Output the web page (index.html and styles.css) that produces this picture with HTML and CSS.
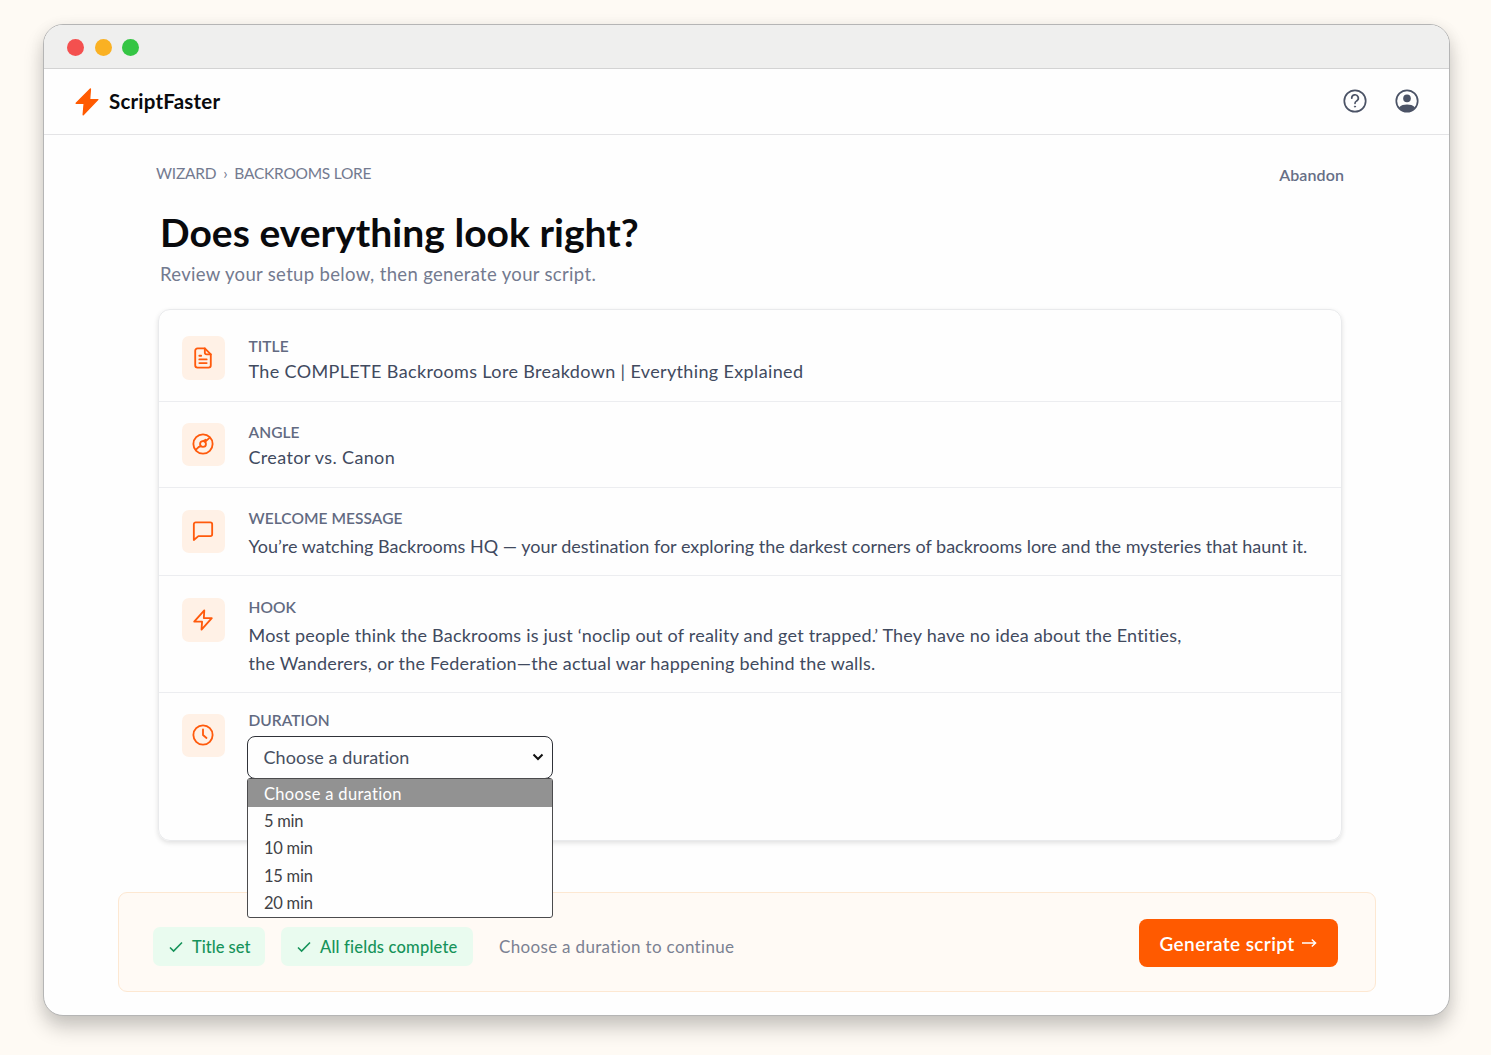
FILE: index.html
```html
<!DOCTYPE html>
<html lang="en">

<head>
    <meta charset="UTF-8">
    <meta name="viewport" content="width=device-width, initial-scale=1.0">
    <title>ScriptFaster - Review</title>
    <link rel="stylesheet" href="styles.css">
</head>

<body>

    <div class="window">
        <!-- Window title bar -->
        <div class="titlebar">
            <span class="dot red"></span>
            <span class="dot yellow"></span>
            <span class="dot green"></span>
        </div>

        <!-- App header -->
        <header class="header">
            <a href="#" class="logo">
                <svg width="24" height="28" viewBox="0 0 24 28">
                    <path d="M15.4 1 1.2 15.2h8L8.2 26.8 22.8 11.6h-8.2z" fill="#ff5a00" stroke="#ff5a00" stroke-width="1.4" stroke-linejoin="round"/>
                </svg>
                <span>ScriptFaster</span>
            </a>
            <div class="header-icons">
                <svg width="24" height="24" viewBox="0 0 24 24" fill="none" stroke="#4b5366" stroke-width="1.7" stroke-linecap="round">
                    <circle cx="12" cy="12" r="10.7"/>
                    <path d="M8.7 9.2a3.3 3.3 0 1 1 5 2.7c-1.1.7-1.7 1.2-1.7 2.4"/>
                    <circle cx="12" cy="17.6" r=".6" fill="#4b5366" stroke-width="1"/>
                </svg>
                <svg width="24" height="24" viewBox="0 0 24 24" fill="none">
                    <circle cx="12" cy="12" r="10.7" stroke="#4b5366" stroke-width="1.7"/>
                    <circle cx="12" cy="9.4" r="3.8" fill="#4b5366"/>
                    <path d="M4 18.4c2-2.2 5-2.9 8-2.9s6 .7 8 2.9c-2 2.7-5 4.3-8 4.3s-6-1.6-8-4.3z" fill="#4b5366"/>
                </svg>
            </div>
        </header>

        <main class="content">
            <div class="top-row">
                <nav class="breadcrumb">
                    <a href="#">WIZARD</a>
                    <span class="separator">›</span>
                    <a href="#">BACKROOMS LORE</a>
                </nav>
                <a href="#" class="abandon">Abandon</a>
            </div>

            <h1>Does everything look right?</h1>
            <p class="subtitle">Review your setup below, then generate your script.</p>

            <!-- Review card -->
            <section class="card">
                <div class="row row-title">
                    <div class="row-icon">
                        <svg width="24" height="24" viewBox="0 0 24 24">
                            <path d="M14 1.5H6a2.5 2.5 0 0 0-2.5 2.5v16a2.5 2.5 0 0 0 2.5 2.5h12a2.5 2.5 0 0 0 2.5-2.5V8z"/>
                            <path d="M14 1.5V6a2 2 0 0 0 2 2h4.5M8 9.5h2M8 13.5h8M8 17.5h8"/>
                        </svg>
                    </div>
                    <div class="row-text">
                        <h2>TITLE</h2>
                        <p class="title-value">The COMPLETE Backrooms Lore Breakdown | Everything Explained</p>
                    </div>
                </div>

                <div class="row row-angle">
                    <div class="row-icon">
                        <svg width="24" height="24" viewBox="0 0 24 24">
                            <circle cx="12" cy="12" r="10.5"/>
                            <circle cx="12" cy="12" r="3.2"/>
                            <path d="M14.3 9.7l4.4-4.1M9.7 14.3l-2.5 1M7.2 15.3l-2.6 2.6M12.3 8.8l2.6-1.5"/>
                        </svg>
                    </div>
                    <div class="row-text">
                        <h2>ANGLE</h2>
                        <p class="angle-value">Creator vs. Canon</p>
                    </div>
                </div>

                <div class="row row-welcome">
                    <div class="row-icon">
                        <svg width="24" height="24" viewBox="0 0 24 24">
                            <path d="M22 15.6a2 2 0 0 1-2 2H7l-5 4.2V4.5a2 2 0 0 1 2-2h16a2 2 0 0 1 2 2z"/>
                        </svg>
                    </div>
                    <div class="row-text">
                        <h2>WELCOME MESSAGE</h2>
                        <p class="welcome-value">You’re watching Backrooms HQ — your destination for exploring the darkest corners of backrooms lore and the mysteries that haunt it.</p>
                    </div>
                </div>

                <div class="row row-hook">
                    <div class="row-icon">
                        <svg width="24" height="24" viewBox="0 0 24 24">
                            <path d="M13.4 1.5 2.4 13.8h8.6l-.6 8.7 11.2-12.6h-8.7z"/>
                        </svg>
                    </div>
                    <div class="row-text">
                        <h2>HOOK</h2>
                        <p class="hook-value">Most people think the Backrooms is just ‘noclip out of reality and get trapped.’ They have no idea about the Entities,<br>
                            the Wanderers, or the Federation—the actual war happening behind the walls.</p>
                    </div>
                </div>

                <div class="row row-duration">
                    <div class="row-icon">
                        <svg width="24" height="24" viewBox="0 0 24 24">
                            <circle cx="12" cy="12" r="10.5"/>
                            <path d="M12 5.8V12l3.8 3.2"/>
                        </svg>
                    </div>
                    <div class="row-text">
                        <h2>DURATION</h2>
                        <div class="select">
                            <button type="button" class="select-button">
                                <span>Choose a duration</span>
                                <svg width="12" height="8" viewBox="0 0 12 8">
                                    <path d="M1.5 1.5 6 6l4.5-4.5" fill="none" stroke="#111" stroke-width="2"/>
                                </svg>
                            </button>
                            <ul class="select-menu">
                                <li class="selected">Choose a duration</li>
                                <li>5 min</li>
                                <li>10 min</li>
                                <li>15 min</li>
                                <li>20 min</li>
                            </ul>
                        </div>
                    </div>
                </div>
            </section>
        </main>

        <!-- Status and generate button -->
        <footer class="action-bar">
            <div class="chip chip-title">
                <svg width="14" height="12" viewBox="0 0 14 12"><path d="M1 6.5 4.6 10 13 1.5"/></svg>
                <span>Title set</span>
            </div>
            <div class="chip chip-fields">
                <svg width="14" height="12" viewBox="0 0 14 12"><path d="M1 6.5 4.6 10 13 1.5"/></svg>
                <span>All fields complete</span>
            </div>
            <p class="hint">Choose a duration to continue</p>
            <button type="button" class="generate">
                <span>Generate script</span>
                <svg width="16" height="10" viewBox="0 0 16 10">
                    <path d="M1 5h13.5M10.8 1.6 14.6 5l-3.8 3.4" fill="none" stroke="#fff" stroke-width="1.4"/>
                </svg>
            </button>
        </footer>
    </div>

</body>

</html>
```
FILE: styles.css
```css
* {
    margin: 0;
    padding: 0;
    box-sizing: border-box;
}

body {
    font-family: Lato, "Noto Sans", sans-serif;
    font-variant-ligatures: none;
    background-color: #fefaf4;
    color: #414a5e;
    padding: 24px 41px 0 43px;
    height: 1055px;
    overflow: hidden;
}

a {
    color: inherit;
    text-decoration: none;
}

p,
h1,
h2,
li,
span {
    white-space: nowrap;
}

/* Browser window */
.window {
    height: 992px;
    background-color: #fefefe;
    border: 1px solid #b5b5b5;
    border-radius: 20px;
    box-shadow: 0 12px 20px rgba(0, 0, 0, 0.2), 0 2px 16px rgba(0, 0, 0, 0.06);
}

.titlebar {
    display: flex;
    align-items: center;
    gap: 10.7px;
    height: 44px;
    padding: 2px 0 0 23px;
    background-color: #efefee;
    border-bottom: 1px solid #d3d3d3;
    border-radius: 19px 19px 0 0;
}

.dot {
    width: 17px;
    height: 17px;
    border-radius: 50%;
}

.red {
    background-color: #f4504f;
}

.yellow {
    background-color: #fab123;
}

.green {
    background-color: #35c544;
}

/* App header */
.header {
    display: flex;
    justify-content: space-between;
    align-items: center;
    height: 66px;
    padding: 0 30px 0 31px;
    border-bottom: 1px solid #e4e4e6;
}

.logo {
    display: flex;
    align-items: center;
    gap: 10px;
    color: #090a0d;
    font-size: 20.5px;
    font-weight: 700;
    letter-spacing: 0.2px;
}

.logo span {
    margin-top: -1px;
}

.header-icons {
    display: flex;
    gap: 28px;
    margin-top: -1px;
}

/* Main content */
.content {
    padding: 0 107px 0 114px;
}

.top-row {
    display: flex;
    justify-content: space-between;
    height: 73px;
    padding: 28px 0 0;
    margin: 0 -2px 0 -2px;
    color: #737a90;
}

.breadcrumb {
    display: flex;
    font-size: 15.5px;
    line-height: 20px;
    letter-spacing: -0.25px;
}

.separator {
    margin: 0 7px 0 7px;
}

.abandon {
    font-size: 16px;
    font-weight: 600;
    line-height: 24px;
    letter-spacing: 0.1px;
    color: #666e86;
}

h1 {
    margin-left: 2px;
    font-size: 39px;
    font-weight: 700;
    line-height: 48px;
    letter-spacing: 0.03px;
    color: #090a0d;
}

.subtitle {
    margin: 6px 0 0 2px;
    font-size: 18.5px;
    line-height: 24px;
    letter-spacing: 0.33px;
    color: #737a8f;
}

/* Review card */
.card {
    height: 532px;
    margin-top: 23px;
    border: 1px solid #e9eaec;
    border-radius: 12px;
    box-shadow: 0 2px 5px rgba(0, 0, 0, 0.12);
}

.row {
    display: flex;
    gap: 24px;
    padding-left: 22.5px;
    border-bottom: 1px solid #ecedf0;
}

.row-title {
    height: 92px;
    padding-top: 26px;
}

.row-angle {
    height: 86px;
    padding-top: 20.5px;
}

.row-welcome {
    height: 88px;
    padding-top: 21.5px;
}

.row-hook {
    height: 117px;
    padding-top: 22px;
}

.row-duration {
    padding-top: 20.5px;
    border-bottom: none;
}

.row-icon {
    display: flex;
    align-items: center;
    justify-content: center;
    width: 43.5px;
    height: 43.5px;
    border-radius: 7px;
    background-color: #fff1e6;
}

.row-icon svg {
    fill: none;
    stroke: #ff5a0c;
    stroke-width: 2;
    stroke-linecap: round;
    stroke-linejoin: round;
    width: 22px;
    height: 22px;
}

.row-text {
    margin-left: -0.5px;
}

.row-text h2 {
    font-size: 15.5px;
    font-weight: 600;
    line-height: 20px;
    letter-spacing: 0.05px;
    color: #626a81;
}

.row-text p {
    font-size: 18px;
    line-height: 28px;
}

.row-title p {
    margin-top: 1px;
}

.row-angle h2,
.row-hook h2 {
    margin-top: -1px;
}

.row-welcome h2 {
    margin-top: -2px;
}

.row-angle p {
    margin-top: 1px;
}

.row-welcome p,
.row-hook p {
    margin-top: 4px;
}

.title-value,
.angle-value {
    letter-spacing: 0.36px;
}

.hook-value {
    letter-spacing: 0.21px;
}

.row-duration h2 {
    margin-top: -4px;
}

/* Duration select */
.select {
    position: relative;
    width: 306px;
    margin: 6px 0 0 -2px;
}

.select-button {
    display: flex;
    justify-content: space-between;
    align-items: center;
    width: 100%;
    height: 43px;
    padding: 0 8px 1px 16px;
    font-family: inherit;
    font-size: 18px;
    letter-spacing: 0.1px;
    color: #474f61;
    background-color: #fefefe;
    border: 1.5px solid #2f3238;
    border-radius: 8px;
}

.select-menu {
    position: absolute;
    top: 42px;
    left: 0;
    width: 100%;
    list-style: none;
    font-size: 16.5px;
    letter-spacing: -0.25px;
    color: #414246;
    background-color: #fefefe;
    border: 1px solid #4b4b4d;
    border-radius: 3px;
}

.select-menu li {
    height: 27.3px;
    padding-left: 16.5px;
    line-height: 28px;
}

.select-menu .selected {
    height: 28.5px;
    line-height: 30px;
    letter-spacing: 0.32px;
    color: #fff;
    background-color: #929292;
}

.select-menu li:last-child {
    height: 28px;
}

/* Bottom bar */
.action-bar {
    display: flex;
    align-items: center;
    height: 100px;
    margin: 51px 73px 0 74px;
    padding: 0 37.5px 0 34px;
    background-color: #fffaf5;
    border: 1px solid #fde8d2;
    border-radius: 9px;
}

.chip {
    display: flex;
    align-items: center;
    gap: 9px;
    height: 39px;
    margin: 8px 16px 0 0;
    padding: 1px 0 0 16px;
    font-size: 16.5px;
    font-weight: 500;
    color: #16935a;
    background-color: #e9fbef;
    border-radius: 7px;
}

.chip svg {
    fill: none;
    stroke: #16935a;
    stroke-width: 1.6;
}

.chip-title {
    width: 112px;
}

.chip-fields {
    width: 192px;
    letter-spacing: 0.2px;
}

.hint {
    margin: 9px 0 0 10px;
    font-size: 17px;
    letter-spacing: 0.33px;
    color: #7b8192;
}

.generate {
    display: flex;
    align-items: center;
    gap: 6px;
    width: 199px;
    height: 48px;
    margin: 1px 0 0 auto;
    padding: 1px 0 0 21px;
    font-family: inherit;
    font-size: 19px;
    font-weight: 600;
    letter-spacing: 0.4px;
    color: #fff;
    background-color: #ff5a00;
    border: none;
    border-radius: 8px;
}
```
